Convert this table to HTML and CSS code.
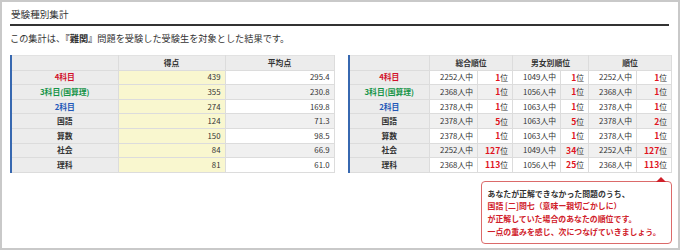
FILE: index.html
```html
<!DOCTYPE html>
<html lang="ja">
<head>
<meta charset="utf-8">
<link rel="stylesheet" href="styles.css">
</head>
<body>
<div class="frame">
  <h2 class="title">受験種別集計</h2>
  <p class="desc">この集計は、<b>『難関』</b>問題を受験した受験生を対象とした結果です。</p>
  <div class="tables">
    <table class="tbl left">
      <colgroup><col class="c1"><col class="c2"><col class="c3"></colgroup>
      <thead><tr><th></th><th>得点</th><th>平均点</th></tr></thead>
      <tbody>
        <tr><th class="red">4科目</th><td class="y">439</td><td>295.4</td></tr>
        <tr class="g"><th class="green">3科目(国算理)</th><td class="y">355</td><td>230.8</td></tr>
        <tr><th class="blue">2科目</th><td class="y">274</td><td>169.8</td></tr>
        <tr class="g"><th>国語</th><td class="y">124</td><td>71.3</td></tr>
        <tr><th>算数</th><td class="y">150</td><td>98.5</td></tr>
        <tr class="g"><th>社会</th><td class="y">84</td><td>66.9</td></tr>
        <tr><th>理科</th><td class="y">81</td><td>61.0</td></tr>
      </tbody>
    </table>
    <div class="rightcol">
      <table class="tbl right">
        <colgroup><col class="r1"><col class="r2"><col class="r3"><col class="r2"><col class="r4"><col class="r2"><col class="r5"></colgroup>
        <thead><tr><th></th><th colspan="2">総合順位</th><th colspan="2">男女別順位</th><th colspan="2">順位</th></tr></thead>
        <tbody>
          <tr><th class="red">4科目</th><td>2252人中</td><td><em>1</em>位</td><td>1049人中</td><td><em>1</em>位</td><td>2252人中</td><td><em>1</em>位</td></tr>
          <tr class="g"><th class="green">3科目(国算理)</th><td>2368人中</td><td><em>1</em>位</td><td>1056人中</td><td><em>1</em>位</td><td>2368人中</td><td><em>1</em>位</td></tr>
          <tr><th class="blue">2科目</th><td>2378人中</td><td><em>1</em>位</td><td>1063人中</td><td><em>1</em>位</td><td>2378人中</td><td><em>1</em>位</td></tr>
          <tr class="g"><th>国語</th><td>2378人中</td><td><em>5</em>位</td><td>1063人中</td><td><em>5</em>位</td><td>2378人中</td><td><em>2</em>位</td></tr>
          <tr><th>算数</th><td>2378人中</td><td><em>1</em>位</td><td>1063人中</td><td><em>1</em>位</td><td>2378人中</td><td><em>1</em>位</td></tr>
          <tr class="g"><th>社会</th><td>2252人中</td><td><em>127</em>位</td><td>1049人中</td><td><em>34</em>位</td><td>2252人中</td><td><em>127</em>位</td></tr>
          <tr><th>理科</th><td>2368人中</td><td><em>113</em>位</td><td>1056人中</td><td><em>25</em>位</td><td>2368人中</td><td><em>113</em>位</td></tr>
        </tbody>
      </table>
      <div class="tip">
        <p class="tip-lead">あなたが正解できなかった問題のうち、</p>
        <p>国語 [二]問七（意味ー親切ごかしに）</p>
        <p>が正解していた場合のあなたの順位です。</p>
        <p>一点の重みを感じ、次につなげていきましょう。</p>
      </div>
    </div>
  </div>
</div>
</body>
</html>
```

FILE: styles.css
```css
* { box-sizing: border-box; }
html, body { margin: 0; padding: 0; background: #fff; }
body {
  font-family: "Noto Sans CJK JP", "Noto Sans", sans-serif;
  color: #333;
}
.frame {
  width: 680px;
  height: 250px;
  border: 2px solid #c9c9c9;
  padding: 5px 9px 0 8px;
  overflow: hidden;
}
.title {
  margin: 0;
  font-size: 9.6px;
  font-weight: normal;
  line-height: 14px;
  padding: 0 0 3px 1px;
  border-bottom: 2px solid #333;
}
.desc {
  margin: 6px 0 0 0;
  font-size: 9.2px;
  line-height: 12px;
}
.desc b { font-weight: bold; }
.tables {
  display: flex;
  gap: 13px;
  margin-top: 11px;
  align-items: flex-start;
}
.tbl {
  border-collapse: collapse;
  table-layout: fixed;
  font-size: 7.8px;
  border-left: 2px solid #3768b0;
}
.tbl th, .tbl td {
  border: 1px solid #dcdcdc;
  height: 14.6px;
  padding: 0 4px;
  line-height: 12px;
  white-space: nowrap;
}
.tbl thead th {
  background: #ececec;
  font-weight: bold;
  text-align: center;
  border-top-color: #e2e2e2;
}
.tbl tbody th {
  background: #ececec;
  font-weight: bold;
  text-align: center;
}
.tbl td { text-align: right; background: #fff; }
.tbl tr.g td { background: #f0f0f0; }
.tbl td.y, .tbl tr.g td.y { background: #f9f7cf; }
.left { width: 323px; }
.c1 { width: 107px; }
.c2 { width: 107px; }
.c3 { width: 109px; }
.rightcol {
  display: flex;
  flex-direction: column;
  width: 323px;
}
.right { width: 323px; }
.r1 { width: 81px; }
.r2 { width: 48px; }
.r3 { width: 35px; }
.r4 { width: 28px; }
.r5 { width: 35px; }
.tbl em { font-style: normal; font-weight: bold; color: #e0141e; font-size: 8.6px; }
.tbl tbody th.red { color: #d2102a; }
.tbl tbody th.green { color: #159447; }
.tbl tbody th.blue { color: #2358b8; }
.tip {
  position: relative;
  align-self: flex-end;
  width: 191px;
  margin-right: -1px;
  margin-top: 8px;
  border: 1px solid #db6a6a;
  border-radius: 4px;
  padding: 6px 0 4px 6px;
  font-size: 7.9px;
  font-weight: bold;
  color: #d0202a;
  line-height: 12.7px;
}
.tip p { margin: 0; white-space: nowrap; }
.tip .tip-lead { color: #333; }
.tip::before {
  content: "";
  position: absolute;
  right: 5px;
  top: -5px;
  border-left: 5px solid transparent;
  border-right: 5px solid transparent;
  border-bottom: 5px solid #d0202a;
}
```
